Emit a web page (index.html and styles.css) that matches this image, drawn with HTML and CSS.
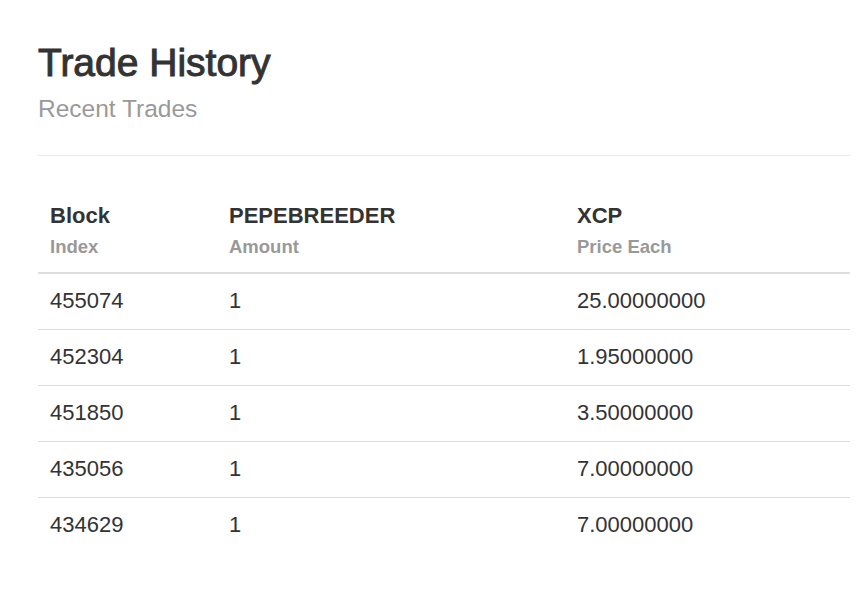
FILE: index.html
```html
<!DOCTYPE html>
<html>
<head>
<meta charset="utf-8">
<link rel="stylesheet" href="styles.css">
</head>
<body>
<div class="page">
  <div class="page-header">
    <h1 class="title">Trade History</h1>
    <div class="subtitle">Recent Trades</div>
  </div>
  <table class="trades">
    <colgroup>
      <col class="c1"><col class="c2"><col class="c3">
    </colgroup>
    <thead>
      <tr>
        <th><div class="h-main">Block</div><div class="h-sub">Index</div></th>
        <th><div class="h-main">PEPEBREEDER</div><div class="h-sub">Amount</div></th>
        <th><div class="h-main">XCP</div><div class="h-sub">Price Each</div></th>
      </tr>
    </thead>
    <tbody>
      <tr><td>455074</td><td>1</td><td>25.00000000</td></tr>
      <tr><td>452304</td><td>1</td><td>1.95000000</td></tr>
      <tr><td>451850</td><td>1</td><td>3.50000000</td></tr>
      <tr><td>435056</td><td>1</td><td>7.00000000</td></tr>
      <tr><td>434629</td><td>1</td><td>7.00000000</td></tr>
    </tbody>
  </table>
</div>
</body>
</html>
```

FILE: styles.css
```css
html, body {
  margin: 0;
  padding: 0;
  background: #fff;
}
body {
  font-family: "Liberation Sans", Arial, sans-serif;
  color: #333;
}
.page {
  padding: 0 18px 0 38px;
}
.page-header {
  padding-top: 41px;
  padding-bottom: 33px;
  border-bottom: 1px solid #e8e8e8;
}
.title {
  margin: 0;
  font-size: 39px;
  line-height: 44px;
  font-weight: normal;
  color: #333;
  -webkit-text-stroke: 1px #333;
  letter-spacing: 0;
}
.subtitle {
  margin-top: 11px;
  font-size: 24.5px;
  line-height: 26px;
  color: #999;
}
.trades {
  margin-top: 33px;
  width: 812px;
  border-collapse: collapse;
  table-layout: fixed;
}
.c1 { width: 179px; }
.c2 { width: 348px; }
.c3 { width: 285px; }
.trades th {
  text-align: left;
  padding: 12px 12px 12px;
  border-bottom: 2px solid #ddd;
  vertical-align: bottom;
}
.h-main {
  font-size: 22px;
  line-height: 30px;
  font-weight: bold;
  color: #333;
}
.h-sub {
  font-size: 18.5px;
  line-height: 26px;
  margin-top: 3px;
  font-weight: bold;
  color: #999;
}
.trades td {
  padding: 11px 12px 12px;
  font-size: 22px;
  line-height: 32px;
  border-top: 1px solid #ddd;
  color: #333;
}
.trades tbody tr:first-child td {
  border-top: none;
}
```
